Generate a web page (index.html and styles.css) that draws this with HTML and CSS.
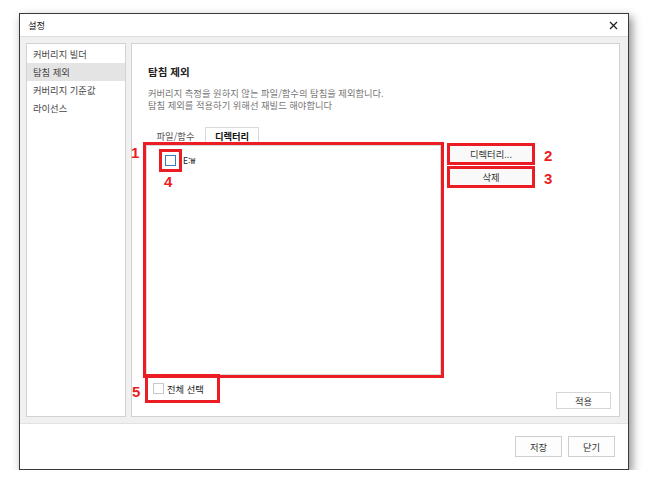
FILE: index.html
```html
<!DOCTYPE html>
<html lang="ko">
<head>
    <meta charset="UTF-8">
    <meta name="viewport" content="width=device-width, initial-scale=1.0">
    <title>설정</title>
    <link rel="stylesheet" href="styles.css">
</head>
<body>
    <div class="window">
        <div class="titlebar">
            <span class="title">설정</span>
            <svg class="close" width="9" height="9" viewBox="0 0 9 9">
                <path d="M1 1 L8 8 M8 1 L1 8" stroke="#222" stroke-width="1.3" fill="none"/>
            </svg>
        </div>

        <div class="content">
            <ul class="nav">
                <li>커버리지 빌더</li>
                <li class="active">탐침 제외</li>
                <li>커버리지 기준값</li>
                <li>라이선스</li>
            </ul>

            <div class="panel">
                <h2>탐침 제외</h2>
                <p class="desc">커버리지 측정을 원하지 않는 파일/함수의 탐침을 제외합니다.<br>탐침 제외를 적용하기 위해선 재빌드 해야합니다</p>

                <div class="tabs">
                    <span class="tab">파일/함수</span>
                    <span class="tab active">디렉터리</span>
                </div>

                <div class="editor">
                    <div class="list">
                        <div class="item">
                            <span class="check-wrap">
                                <span class="check blue"></span>
                                <span class="mark m4"><span class="num">4</span></span>
                            </span>
                            <span>E:₩</span>
                        </div>
                        <span class="mark m1"><span class="num">1</span></span>
                    </div>
                    <div class="side-buttons">
                        <button class="btn">디렉터리...<span class="mark"><span class="num n2">2</span></span></button>
                        <button class="btn">삭제<span class="mark"><span class="num n3">3</span></span></button>
                    </div>
                </div>

                <div class="panel-foot">
                    <label class="select-all">
                        <span class="check"></span>
                        <span>전체 선택</span>
                        <span class="mark m5"><span class="num">5</span></span>
                    </label>
                    <button class="btn apply">적용</button>
                </div>
            </div>
        </div>

        <div class="footer">
            <button class="btn big">저장</button>
            <button class="btn big">닫기</button>
        </div>
    </div>
</body>
</html>
```

FILE: styles.css
```css
body {
    margin: 0;
    padding: 13px 0 0 19px;
    background: #fff;
    font-family: "Noto Sans CJK KR", "Noto Sans", sans-serif;
    font-size: 9.3px;
    color: #333;
}
.window {
    width: 608px;
    border: 1px solid #3a3a3a;
    background: #fff;
    box-shadow: 3px 4px 9px rgba(0, 0, 0, 0.45);
}
.titlebar {
    height: 22px;
    display: flex;
    align-items: center;
    justify-content: space-between;
    padding: 0 10px 0 8px;
}
.title {
    color: #222;
    line-height: 22px;
}
.close {
    display: block;
    margin-top: 1px;
}
.content {
    display: flex;
    gap: 5px;
    height: 374px;
    padding: 6px 8px 6px 6px;
    background: #f0f0f0;
    border-top: 1px solid #dedede;
}
.nav {
    list-style: none;
    margin: 0;
    padding: 1px 0 0;
    width: 100px;
    box-sizing: border-box;
    background: #fff;
    border: 1px solid #d2d2d2;
}
.nav li {
    height: 18px;
    line-height: 18px;
    padding-left: 6px;
    color: #444;
}
.nav li.active {
    background: #e4e4e4;
}
.panel {
    flex: 1;
    box-sizing: border-box;
    background: #fff;
    border: 1px solid #d2d2d2;
    padding: 21px 0 0 14px;
}
.panel h2 {
    margin: 0 0 0 2px;
    font-size: 10.5px;
    line-height: 14px;
    color: #222;
}
.desc {
    margin: 8px 0 0 2px;
    line-height: 12px;
    color: #777;
}
.tabs {
    display: flex;
    height: 18px;
    margin-top: 16px;
}
.tab {
    box-sizing: border-box;
    width: 59px;
    line-height: 18px;
    text-align: center;
    color: #555;
}
.tab.active {
    width: 54px;
    border: 1px solid #dadada;
    border-bottom: none;
    line-height: 17px;
    color: #111;
    font-weight: bold;
}
.editor {
    display: flex;
    gap: 8px;
    height: 230px;
}
.list {
    position: relative;
    width: 295px;
    box-sizing: border-box;
    border: 1px solid #dadada;
    padding: 8px 0 0 18px;
}
.item {
    display: flex;
    align-items: center;
    gap: 7px;
    height: 12px;
    color: #222;
    font-size: 8.5px;
}
.check-wrap {
    position: relative;
    display: block;
}
.check {
    display: block;
    width: 11px;
    height: 11px;
    box-sizing: border-box;
    border: 1px solid #c8c8c8;
    background: #fff;
}
.check.blue {
    border-color: #3d7ab5;
}
.side-buttons {
    display: flex;
    flex-direction: column;
    gap: 5px;
}
.btn {
    position: relative;
    box-sizing: border-box;
    width: 84px;
    height: 18px;
    padding: 0;
    border: 1px solid #d6d6d6;
    background: #f9f9f9;
    font-family: inherit;
    font-size: 9.3px;
    color: #333;
}
.panel-foot {
    display: flex;
    justify-content: space-between;
    align-items: flex-start;
    padding-right: 8px;
}
.select-all {
    position: relative;
    display: flex;
    align-items: center;
    gap: 3px;
    width: 69px;
    height: 23px;
    box-sizing: border-box;
    margin: 2px 0 0 2px;
    padding-left: 5px;
    color: #222;
}
.btn.apply {
    width: 55px;
    height: 17px;
    margin-top: 17px;
    background: #fff;
}
.footer {
    display: flex;
    justify-content: flex-end;
    gap: 6px;
    height: 46px;
    box-sizing: border-box;
    padding: 12px 13px 0 0;
    border-top: 1px solid #e2e2e2;
}
.btn.big {
    width: 47px;
    height: 21px;
    background: #fdfdfd;
    border-color: #cfcfcf;
}

/* annotation overlays */
.mark {
    position: absolute;
    inset: -3px;
    border: 3px solid #ec1c24;
    pointer-events: none;
}
.m1 {
    inset: -4px;
}
.m4 {
    inset: -6px;
}
.num {
    position: absolute;
    font-family: "Liberation Sans", Arial, sans-serif;
    font-weight: bold;
    font-size: 15px;
    line-height: 15px;
    color: #ec1c24;
}
.m1 .num {
    left: -15px;
    top: 0;
}
.n2,
.n3 {
    left: calc(100% + 12px);
    top: 2px;
}
.m4 .num {
    left: 2px;
    top: 22px;
}
.m5 .num {
    left: -16px;
    top: 7px;
}
```
